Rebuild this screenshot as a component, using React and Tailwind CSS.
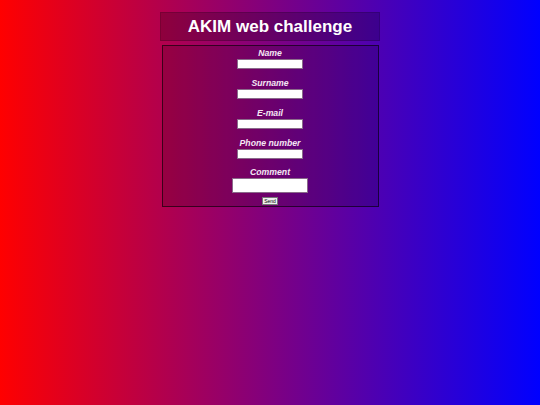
export default function App() {
  const fields = ["Name", "Surname", "E-mail", "Phone number"];
  return (
    <div className="w-[540px] h-[405px] bg-[linear-gradient(to_right,#ff0000,#0000ff)] flex flex-col items-center pt-[12px] font-['Liberation_Sans',Arial,sans-serif]">
      <div className="w-[220px] h-[29px] bg-black/20 border border-black/15 flex items-center justify-center">
        <h1 className="text-white font-bold text-[17px] leading-none">AKIM web challenge</h1>
      </div>
      <form className="mt-[4px] w-[217px] border border-black/60 bg-black/15 flex flex-col items-center pt-[1px] pb-[1px]">
        {fields.map((f) => (
          <div key={f} className="flex flex-col items-center mb-[8px]">
            <label className="text-[#f4e6f4] font-bold italic text-[8.7px] leading-[12px]">{f}</label>
            <input type="text" className="w-[66px] h-[10px] bg-white border border-[#8a6a8a]" />
          </div>
        ))}
        <div className="flex flex-col items-center -mt-[1px]">
          <label className="text-[#f4e6f4] font-bold italic text-[8.7px] leading-[12px]">Comment</label>
          <textarea className="w-[76px] h-[15px] bg-white border border-[#8a6a8a] resize-none" />
        </div>
        <button type="button" className="mt-[4px] h-[8px] w-[16px] bg-[#efefef] border border-[#767676] text-[5px] leading-none text-black">Send</button>
      </form>
    </div>
  );
}
